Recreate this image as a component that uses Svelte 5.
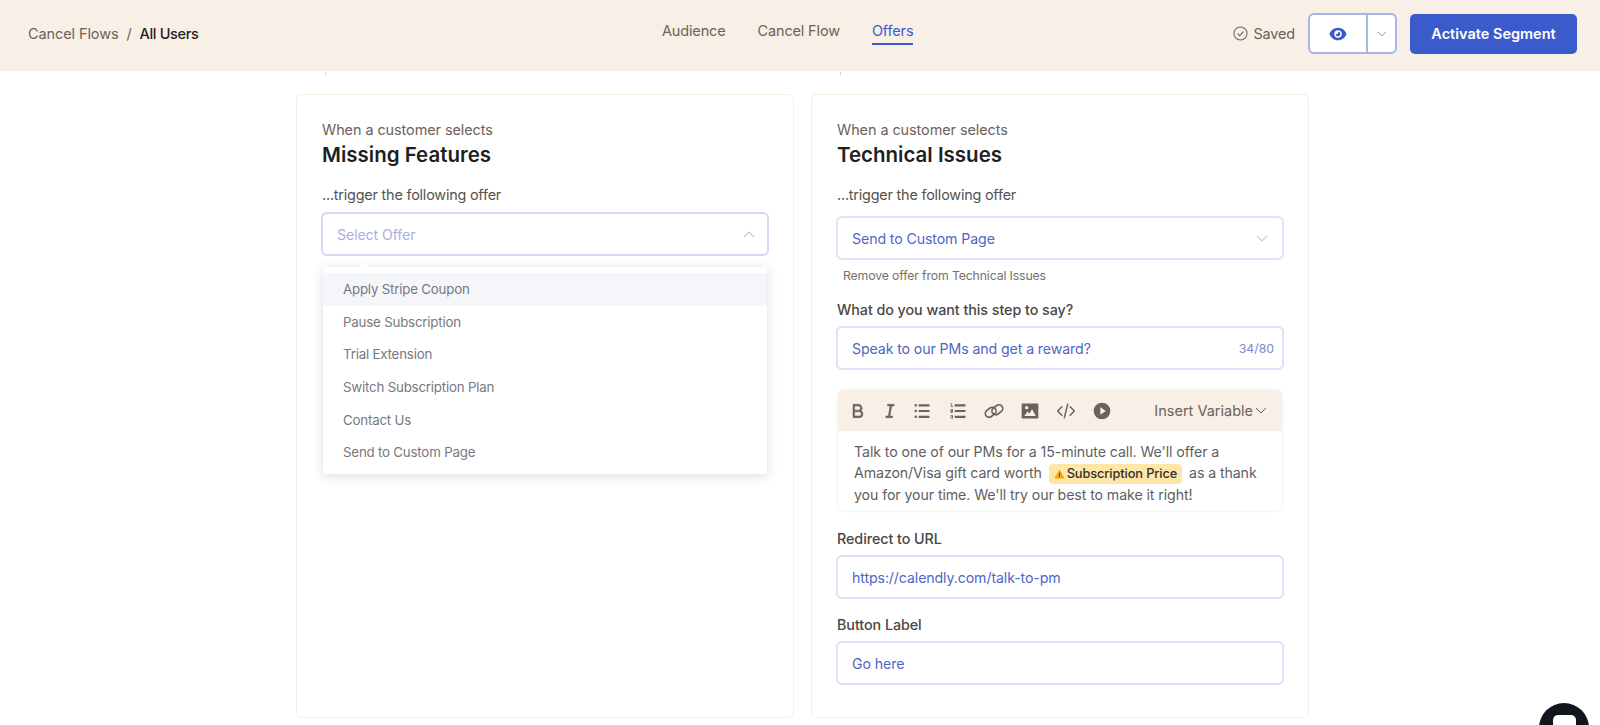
<script>
  const offers = [
    "Apply Stripe Coupon",
    "Pause Subscription",
    "Trial Extension",
    "Switch Subscription Plan",
    "Contact Us",
    "Send to Custom Page"
  ];
</script>

<div class="page">
  <header class="topbar">
    <div class="crumbs">
      <span>Cancel Flows</span>
      <span class="slash">/</span>
      <span class="current">All Users</span>
    </div>
    <nav class="tabs">
      <span>Audience</span>
      <span>Cancel Flow</span>
      <span class="active">Offers</span>
    </nav>
    <div class="actions">
      <span class="saved">
        <svg width="15" height="15" viewBox="0 0 16 16" fill="none" stroke="#6b625a" stroke-width="1.1">
          <circle cx="8" cy="8" r="7" />
          <path d="M5 8.2l2.1 2.1L11.2 6" />
        </svg>
        Saved
      </span>
      <div class="split">
        <button class="eye" aria-label="Preview">
          <svg width="18" height="14" viewBox="0 0 17 13">
            <path fill="#3b5bcd" fill-rule="evenodd" d="M8.5.5c3.9 0 6.9 2.6 8.1 6-1.2 3.400-4.200 6-8.100 6S1.600 9.900.4 6.500C1.600 3.100 4.600.5 8.500.5zm0 2.500a3.500 3.500 0 1 0 0 7 3.500 3.500 0 0 0 0-7z" />
            <path fill="#3b5bcd" d="M8.500 4.300a2.200 2.200 0 1 1-2.200 2.200h2.200z" />
          </svg>
        </button>
        <button class="more" aria-label="More">
          <svg width="10" height="6" viewBox="0 0 10 6" fill="none" stroke="#8d9ac9" stroke-width="1"><path d="M1 1l4 4 4-4" /></svg>
        </button>
      </div>
      <button class="activate">Activate Segment</button>
    </div>
  </header>

  <main class="cards">
    <section class="card">
      <span class="stub"></span>
      <p class="lead">When a customer selects</p>
      <h2>Missing Features</h2>
      <p class="trigger">...trigger the following offer</p>
      <div class="picker">
        <div class="field open">
          <span class="placeholder">Select Offer</span>
          <svg width="12" height="7" viewBox="0 0 12 7" fill="none" stroke="#c9ccd6" stroke-width="1.2"><path d="M1 6l5-5 5 5" /></svg>
        </div>
        <div class="menu">
          <span class="tip"></span>
          {#each offers as offer, i}
            <div class="option" class:hover={i === 0}>{offer}</div>
          {/each}
        </div>
      </div>
    </section>

    <section class="card">
      <span class="stub"></span>
      <p class="lead">When a customer selects</p>
      <h2>Technical Issues</h2>
      <p class="trigger">...trigger the following offer</p>
      <div class="field second">
        <span>Send to Custom Page</span>
        <svg width="12" height="7" viewBox="0 0 12 7" fill="none" stroke="#c9ccd6" stroke-width="1.2"><path d="M1 1l5 5 5-5" /></svg>
      </div>
      <p class="remove">Remove offer from Technical Issues</p>

      <label class="label">What do you want this step to say?</label>
      <div class="field">
        <span>Speak to our PMs and get a reward?</span>
        <span class="count">34/80</span>
      </div>

      <div class="editor">
        <div class="toolbar">
          <svg class="ico tight" viewBox="0 0 24 24"><path d="M8 11h4.500a2.500 2.500 0 0 0 0-5H8v5zm10 4.500a4.500 4.500 0 0 1-4.500 4.500H6V4h6.500a4.500 4.500 0 0 1 3.256 7.606A4.500 4.500 0 0 1 18 15.500zM8 13v5h5.500a2.500 2.500 0 0 0 0-5H8z" /></svg>
          <svg class="ico tight" viewBox="0 0 24 24"><path d="M15 20H7v-2h2.927L12.043 6H9V4h8v2h-2.927l-2.116 12H15v2z" /></svg>
          <svg class="ico" viewBox="0 0 24 24"><path d="M8 4h13v2.500H8V4zM4.500 6.500a1.500 1.500 0 1 1 0-3 1.500 1.500 0 0 1 0 3zm0 7a1.500 1.500 0 1 1 0-3 1.500 1.500 0 0 1 0 3zm0 6.900a1.500 1.500 0 1 1 0-3 1.500 1.500 0 0 1 0 3zM8 10.800h13v2.500H8v-2.500zm0 7h13v2.500H8v-2.500z" /></svg>
          <svg class="ico" viewBox="0 0 24 24"><path d="M8 4h13v2.500H8V4zM5 3v3h1v1H3V6h1V4H3V3h2zM3 14v-2.500h2V11H3v-1h3v2.500H4v.5h2v1H3zm2 5.500H3v-1h2V18H3v-1h3v4H3v-1h2v-.5zM8 10.800h13v2.500H8v-2.500zm0 7h13v2.500H8v-2.500z" /></svg>
          <svg class="ico line" viewBox="0 0 24 24">
            <rect x="1" y="9" width="14" height="9" rx="4.500" transform="rotate(-38 8 13.500)" />
            <rect x="9" y="6" width="14" height="9" rx="4.500" transform="rotate(-38 16 10.500)" />
          </svg>
          <svg class="ico" viewBox="0 0 24 24"><path fill-rule="evenodd" d="M3 3h18a1 1 0 0 1 1 1v16a1 1 0 0 1-1 1H3a1 1 0 0 1-1-1V4a1 1 0 0 1 1-1zm2 15h14l-4.500-8-3.300 5-2.200-2.500L5 18zM8 10a2 2 0 1 0 0-4 2 2 0 0 0 0 4z" /></svg>
          <svg class="ico line thin" viewBox="0 0 24 24"><path d="M7 7l-5 5 5 5M17 7l5 5-5 5M14 4l-4 16" /></svg>
          <svg class="ico" viewBox="0 0 24 24"><path fill-rule="evenodd" d="M12 2a10 10 0 1 1 0 20 10 10 0 0 1 0-20zM10 7.500v9l6.500-4.500L10 7.500z" /></svg>
          <span class="insert">
            Insert Variable
            <svg width="12" height="7" viewBox="0 0 12 7" fill="none" stroke="#6b625a" stroke-width="1"><path d="M1 1l5 5 5-5" /></svg>
          </span>
        </div>
        <div class="copy">
          Talk to one of our PMs for a 15-minute call. We'll offer a Amazon/Visa gift card worth
          <span class="variable"><svg width="11" height="10" viewBox="0 0 12 11"><path fill="#f0a80e" d="M6 .5l5.800 10H.2z" /><path fill="#5c3f00" d="M5.500 4h1v3.500h-1zM5.500 8h1v1h-1z" /></svg>Subscription Price</span>
          as a thank you for your time. We'll try our best to make it right!
        </div>
      </div>

      <label class="label after-editor">Redirect to URL</label>
      <div class="field"><span>https://calendly.com/talk-to-pm</span></div>

      <label class="label">Button Label</label>
      <div class="field"><span>Go here</span></div>
    </section>
  </main>

  <button class="chat" aria-label="Chat"><span></span></button>
</div>

<style>
  :global(body) {
    margin: 0;
    background: #fff;
  }

  .page {
    position: relative;
    height: 725px;
    overflow: hidden;
    font-family: Inter, "Noto Sans", sans-serif;
    color: #5f5a55;
  }

  .topbar {
    display: flex;
    align-items: center;
    height: 71px;
    padding: 0 23px 4px 28px;
    box-sizing: border-box;
    background: #f8efe7;
    font-size: 14.500px;
  }

  .crumbs {
    width: 634px;
    display: flex;
    gap: 8px;
    color: #6b625a;
    letter-spacing: -0.1px;
  }

  .current {
    color: #26231f;
    font-weight: 500;
    letter-spacing: -0.35px;
  }

  .tabs {
    display: flex;
    gap: 32px;
    margin-top: -6px;
    color: #6b625a;
    letter-spacing: -0.15px;
  }

  .tabs .active {
    color: #3b5bcd;
    position: relative;
  }

  .tabs .active::after {
    content: "";
    position: absolute;
    left: 0;
    right: 0;
    bottom: -6px;
    height: 2px;
    background: #3b5bcd;
  }

  .actions {
    margin-left: auto;
    display: flex;
    align-items: center;
  }

  .saved {
    display: flex;
    align-items: center;
    gap: 5px;
    margin-right: 13px;
    font-size: 14.400px;
    color: #6b625a;
    letter-spacing: -0.1px;
  }

  .split {
    display: flex;
    height: 41px;
    margin-right: 13px;
    background: #fff;
    border: 2px solid #a5b5e8;
    border-radius: 6px;
    box-sizing: border-box;
  }

  .split button {
    border: 0;
    background: none;
    padding: 0;
    display: flex;
    align-items: center;
    justify-content: center;
  }

  .eye {
    width: 58px;
    border-right: 2px solid #a5b5e8 !important;
  }

  .more {
    width: 27px;
  }

  .activate {
    width: 167px;
    height: 40px;
    border: 0;
    border-radius: 5px;
    background: #3b5bcd;
    color: #fff;
    font: 600 14.500px Inter, sans-serif;
  }

  .cards {
    display: grid;
    grid-template-columns: 498px 498px;
    gap: 17px;
    padding: 23px 0 0 296px;
  }

  .card {
    position: relative;
    height: 624px;
    padding: 0 24px;
    box-sizing: border-box;
    border: 1px solid #f6f0e3;
    border-radius: 5px;
    background: #fff;
  }

  .stub {
    position: absolute;
    left: 28px;
    top: -23px;
    width: 1px;
    height: 3px;
    background: #d8d2c8;
  }

  p {
    margin: 0;
  }

  .lead {
    margin: 26px 0 0 1px;
    font-size: 14.400px;
    line-height: 17px;
    letter-spacing: -0.05px;
    color: #6b625a;
  }

  h2 {
    margin: 4px 0 0 1px;
    font-size: 20.500px;
    line-height: 26px;
    font-weight: 600;
    color: #1f1f1f;
  }

  .trigger {
    margin: 18px 0 0 1px;
    font-size: 14.400px;
    line-height: 17px;
    letter-spacing: -0.2px;
    color: #56524e;
  }

  .picker {
    position: relative;
    margin-top: 9px;
  }

  .field {
    display: flex;
    align-items: center;
    justify-content: space-between;
    height: 44px;
    padding: 0 14px;
    box-sizing: border-box;
    border: 2px solid #dde1f6;
    border-radius: 6px;
    background: #fff;
    font-size: 14.200px;
    letter-spacing: -0.12px;
    color: #4f66c4;
  }

  .field.open {
    padding-right: 12px;
    border-color: #d3d8f5;
  }

  .placeholder {
    color: #a9b0e6;
  }

  .second {
    margin-top: 13px;
  }

  .count {
    font-size: 12.300px;
    color: #7b8bca;
    margin-right: -6px;
    letter-spacing: 0;
  }

  .menu {
    position: absolute;
    left: 2px;
    right: 2px;
    top: 55px;
    height: 207px;
    padding-top: 6px;
    box-sizing: border-box;
    background: #fff;
    border-radius: 3px;
    box-shadow: 0 2px 12px rgba(40, 45, 70, 0.16);
    z-index: 2;
  }

  .tip {
    position: absolute;
    left: 36px;
    top: -5px;
    width: 0;
    height: 0;
    border: 5px solid transparent;
    border-top: 0;
    border-bottom-color: #fff;
  }

  .option {
    height: 32.700px;
    line-height: 32px;
    padding-left: 20px;
    font-size: 13.300px;
    letter-spacing: -0.2px;
    color: #77797d;
  }

  .option.hover {
    background: #f5f6fa;
  }

  .remove {
    margin: 8px 0 0 7px;
    font-size: 12.300px;
    line-height: 16px;
    letter-spacing: -0.15px;
    color: #77716a;
  }

  .label {
    display: block;
    margin: 17px 0 8px 1px;
    font-size: 14.300px;
    line-height: 17px;
    font-weight: 500;
    letter-spacing: -0.05px;
    color: #4a4744;
  }

  .label.after-editor {
    margin-top: 19px;
  }

  .editor {
    margin: 20px 2px 0;
    height: 121px;
    border-radius: 6px;
    box-shadow: 0 0 2px rgba(120, 110, 90, 0.25);
    overflow: hidden;
  }

  .toolbar {
    display: flex;
    align-items: center;
    height: 41px;
    padding: 0 15px 0 10px;
    gap: 16px;
    background: #f8efe7;
  }

  .ico {
    width: 20px;
    height: 20px;
    fill: #6b625a;
    flex: none;
  }

  .ico.tight {
    margin-right: -4px;
    stroke: #6b625a;
    stroke-width: 0.6;
  }

  .ico.line {
    fill: none;
    stroke: #6b625a;
    stroke-width: 2;
    stroke-linecap: round;
    stroke-linejoin: round;
  }

  .ico.thin {
    stroke-width: 1.800;
  }

  .insert {
    margin-left: auto;
    display: flex;
    align-items: center;
    gap: 2px;
    font-size: 14.500px;
    color: #6b625a;
  }

  .copy {
    padding: 10px 16px 0;
    font-size: 14.200px;
    line-height: 21px;
    letter-spacing: -0.1px;
    color: #5f5f63;
  }

  .variable {
    display: inline-flex;
    align-items: center;
    gap: 2px;
    height: 20px;
    margin: 0 3px;
    padding: 0 5px;
    border-radius: 4px;
    background: #fde6a6;
    font-size: 12.800px;
    font-weight: 500;
    color: #33302a;
    vertical-align: -1px;
    line-height: 20px;
  }

  .chat {
    position: absolute;
    left: 1539px;
    top: 703px;
    width: 50px;
    height: 50px;
    padding: 0;
    border: 0;
    border-radius: 50%;
    background: #14161f;
  }

  .chat span {
    position: absolute;
    left: 14px;
    top: 12px;
    width: 23px;
    height: 24px;
    border-radius: 5px;
    background: #fff;
  }
</style>
